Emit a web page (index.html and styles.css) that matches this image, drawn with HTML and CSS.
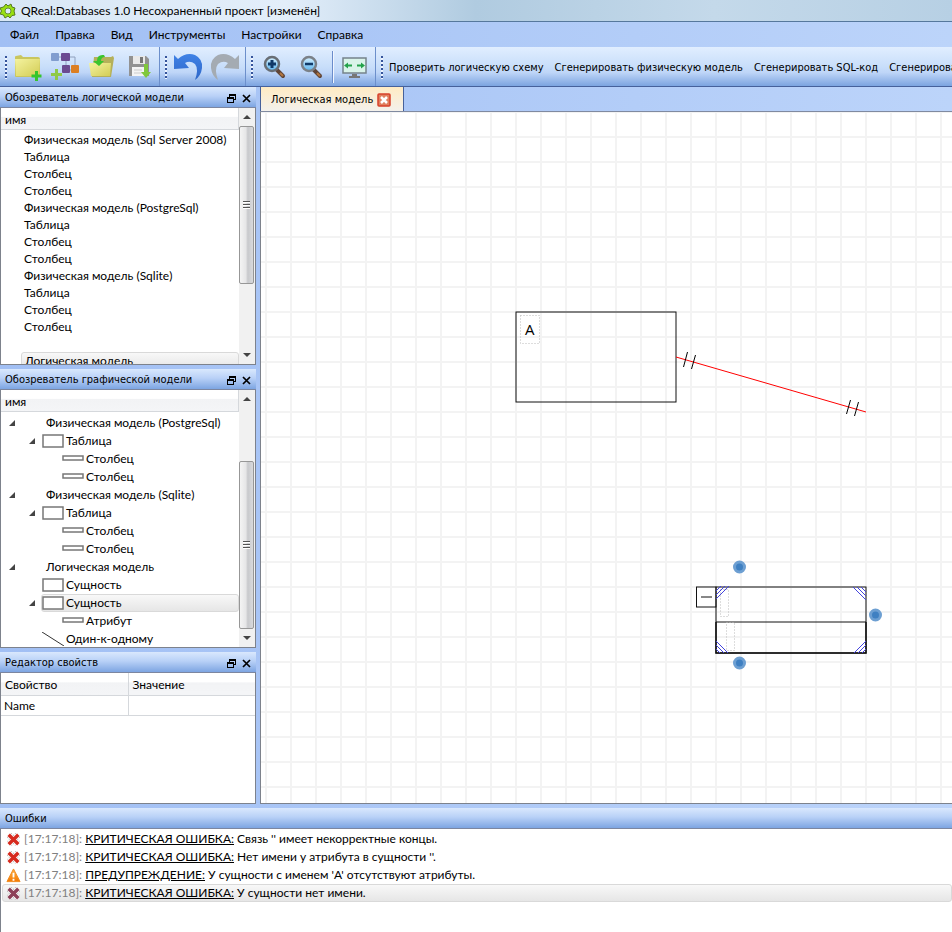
FILE: index.html
```html
<!DOCTYPE html>
<html lang="ru">
<head>
<meta charset="utf-8">
<title>QReal:Databases 1.0</title>
<link rel="stylesheet" href="styles.css">
</head>
<body>
<svg class="defs" aria-hidden="true">
  <defs>
    <linearGradient id="folder" x1="0" y1="0" x2="1" y2="1"><stop offset="0" stop-color="#f4f3a0"/><stop offset="1" stop-color="#d3cd55"/></linearGradient>
    <linearGradient id="undo" x1="0" y1="0" x2="0" y2="1"><stop offset="0" stop-color="#3f82e6"/><stop offset="1" stop-color="#2f67c8"/></linearGradient>
    <linearGradient id="lens" x1="0" y1="0" x2="0" y2="1"><stop offset="0" stop-color="#d5f0ff"/><stop offset="1" stop-color="#5db5ee"/></linearGradient>
    <linearGradient id="warn" x1="0" y1="0" x2="0" y2="1"><stop offset="0" stop-color="#ffb347"/><stop offset="1" stop-color="#f57900"/></linearGradient>
    <symbol id="float" viewBox="0 0 9 9"><path d="M2 0h7v6H7V5h1V2H3v1H2zM0 3h7v6H0zM1 5v3h5V5z" fill="#000" fill-rule="evenodd"/></symbol>
    <symbol id="close" viewBox="0 0 9 9"><path d="M1 1l7 7M8 1l-7 7" stroke="#000" stroke-width="1.7"/></symbol>
    <symbol id="entity" viewBox="0 0 22 14"><rect x="1" y="1" width="20" height="12" fill="#fff" stroke="#777" stroke-width="1.5"/></symbol>
    <symbol id="column" viewBox="0 0 22 14"><rect x="1" y="4" width="20" height="4" fill="#fff" stroke="#777" stroke-width="1.5"/></symbol>
    <symbol id="link" viewBox="0 0 22 14"><path d="M0 0l22 14" stroke="#333" fill="none"/></symbol>
    <symbol id="cross" viewBox="0 0 14 14"><path d="M3 3l8 8M11 3l-8 8" stroke="#aaa" stroke-width="6" stroke-dasharray="1 1"/><path d="M3 3l8 8M11 3l-8 8" stroke="#fff" stroke-width="4.600"/><path d="M2.500 2.500l9 9M11.500 2.500l-9 9" stroke="currentColor" stroke-width="3.200"/></symbol>
    <symbol id="warning" viewBox="0 0 16 16"><path d="M8 1L15 14.500H1z" fill="url(#warn)" stroke="#ef8a1d" stroke-linejoin="round"/><path d="M8 5v5M8 11.500v2" stroke="#fff" stroke-width="2"/></symbol>
  </defs>
</svg>

<div class="window">
  <header class="titlebar">
    <svg class="app-icon" viewBox="0 0 16 16"><path d="M6 1l2 2 3-2 1 3 3 1-1 3 1 4-3 .5L10 15l-2-2-3 2-1.500-3L0 11l1.500-3L0 5l3.500-1z" fill="#98e010" stroke="#567a20"/><circle cx="8" cy="8" r="3" fill="#dcebf5" stroke="#678f35"/></svg>
    <span>QReal:Databases 1.0 Несохраненный проект [изменён]</span>
  </header>

  <nav class="menubar">
    <button>Файл</button><button>Правка</button><button>Вид</button><button>Инструменты</button><button>Настройки</button><button>Справка</button>
  </nav>

  <div class="toolbar">
    <div class="group">
      <i class="grip"></i>
      <button class="tool" aria-label="Новый проект"><svg viewBox="0 0 32 32"><path d="M3 6q0-1 1-1l5-1 2 2h15q2 0 2 2v15l-2 3H4q-1 0-1-1z" fill="#c9c65f"/><path d="M3 8h25l-1 17H4z" fill="url(#folder)"/><path d="M24.500 20v10M19.500 25h10" stroke="#36c52c" stroke-width="3"/></svg></button>
      <button class="tool" aria-label="Новая диаграмма"><svg viewBox="0 0 32 32"><path d="M10 6h16v8M17 9v10h6" stroke="#8fa0bc" fill="none"/><rect x="2" y="2" width="8" height="8" rx="1" fill="#819dcf"/><rect x="12" y="2" width="9" height="8" rx="1" fill="#6b4a91"/><rect x="13" y="14" width="8" height="8" rx="1" fill="#6b4a91"/><rect x="22" y="14" width="8" height="8" rx="1" fill="#dc7f23"/><path d="M7.500 18v11M2 23.500h11" stroke="#8fc947" stroke-width="3"/></svg></button>
      <button class="tool" aria-label="Открыть"><svg viewBox="0 0 32 32"><path d="M8 6h17l2-1 1 2-3 19H6z" fill="#b5b05a"/><path d="M3 12h22l-1 13H5z" fill="url(#folder)"/><path d="M18 4Q11 3 11 10H7l6 5 5-5h-3q0-4 4-4z" fill="#3bc52e"/></svg></button>
      <button class="tool" aria-label="Сохранить"><svg viewBox="0 0 32 32"><path d="M6 5h17l3 3v17H6z" fill="#929292"/><path d="M10 5h12v8H10z" fill="#e9e9e9"/><path d="M17 6h3v6h-3z" fill="#777"/><path d="M9 16h14v9H9z" fill="#f4f4f4"/><path d="M11 19h8M11 22h8" stroke="#ccc"/><path d="M21 13h4v8h3l-5 6-5-6h3z" fill="#80c83c"/></svg></button>
    </div>
    <div class="group">
      <i class="grip"></i>
      <button class="tool" aria-label="Отменить"><svg viewBox="0 0 32 32"><path d="M2 4l4 4Q14 1 23 4q8 4 7 13-1 8-7 12 4-11 0-16-5-4-10-1l4 5-15 1z" fill="url(#undo)"/></svg></button>
      <button class="tool" aria-label="Повторить"><svg viewBox="0 0 32 32"><path d="M30 4l-4 4Q18 1 9 4q-8 4-7 13 1 8 7 12-4-11 0-16 5-4 10-1l-4 5 15 1z" fill="#a4abb2"/></svg></button>
    </div>
    <div class="group">
      <i class="grip"></i>
      <button class="tool" aria-label="Увеличить"><svg viewBox="0 0 32 32"><path d="M19 19l6 6" stroke="#604537" stroke-width="4" stroke-linecap="round"/><path d="M22 22l3 3" stroke="#b37740" stroke-width="2"/><circle cx="14" cy="13" r="7" fill="url(#lens)" stroke="#686e75" stroke-width="2.500"/><path d="M14 9v8M10 13h8" stroke="#103a68" stroke-width="3"/></svg></button>
      <button class="tool" aria-label="Уменьшить"><svg viewBox="0 0 32 32"><path d="M19 19l6 6" stroke="#604537" stroke-width="4" stroke-linecap="round"/><path d="M22 22l3 3" stroke="#b37740" stroke-width="2"/><circle cx="14" cy="13" r="7" fill="url(#lens)" stroke="#7b8188" stroke-width="2.500"/><path d="M10 13h8" stroke="#103a68" stroke-width="2.500"/></svg></button>
      <i class="separator"></i>
      <button class="tool" aria-label="По размеру окна"><svg viewBox="0 0 32 32"><rect x="4" y="7" width="23" height="15" fill="#d9f3e9" stroke="#75838a" stroke-width="1.500"/><path d="M13 23h5v2h3v2H10v-2h3z" fill="#777"/><path d="M5 14.500l4-3v2h4v2h-4v2zM26 14.500l-4-3v2h-4v2h4v2z" fill="#23a24a"/></svg></button>
    </div>
    <div class="group actions">
      <i class="grip"></i>
      <button>Проверить логическую схему</button><button>Сгенерировать физическую модель</button><button>Сгенерировать SQL-код</button><button>Сгенерировать логическую модель</button>
    </div>
  </div>

  <main class="workspace">
    <aside class="docks">
      <section class="dock">
        <h2>Обозреватель логической модели <button aria-label="Открепить"><svg><use href="#float"/></svg></button><button aria-label="Закрыть"><svg><use href="#close"/></svg></button></h2>
        <div class="dock-body">
          <div class="tree-pane">
            <div class="column-head">имя</div>
            <ul class="tree flat">
              <li>Физическая модель (Sql Server 2008)</li><li>Таблица</li><li>Столбец</li><li>Столбец</li>
              <li>Физическая модель (PostgreSql)</li><li>Таблица</li><li>Столбец</li><li>Столбец</li>
              <li>Физическая модель (Sqlite)</li><li>Таблица</li><li>Столбец</li><li>Столбец</li>
              <li></li><li class="current">Логическая модель</li>
            </ul>
          </div>
          <div class="scrollbar"><i class="arrow up"></i><div class="track upper"><i class="thumb"></i></div><i class="arrow down"></i></div>
        </div>
      </section>

      <section class="dock">
        <h2>Обозреватель графической модели <button aria-label="Открепить"><svg><use href="#float"/></svg></button><button aria-label="Закрыть"><svg><use href="#close"/></svg></button></h2>
        <div class="dock-body">
          <div class="tree-pane">
            <div class="column-head">имя</div>
            <ul class="tree">
              <li class="level1"><i class="open"></i><span class="item root">Физическая модель (PostgreSql)</span></li>
              <li class="level2"><i class="open"></i><span class="item"><svg><use href="#entity"/></svg>Таблица</span></li>
              <li class="level3"><i></i><span class="item"><svg><use href="#column"/></svg>Столбец</span></li>
              <li class="level3"><i></i><span class="item"><svg><use href="#column"/></svg>Столбец</span></li>
              <li class="level1"><i class="open"></i><span class="item root">Физическая модель (Sqlite)</span></li>
              <li class="level2"><i class="open"></i><span class="item"><svg><use href="#entity"/></svg>Таблица</span></li>
              <li class="level3"><i></i><span class="item"><svg><use href="#column"/></svg>Столбец</span></li>
              <li class="level3"><i></i><span class="item"><svg><use href="#column"/></svg>Столбец</span></li>
              <li class="level1"><i class="open"></i><span class="item root">Логическая модель</span></li>
              <li class="level2"><i></i><span class="item"><svg><use href="#entity"/></svg>Сущность</span></li>
              <li class="level2"><i class="open"></i><span class="item current"><svg><use href="#entity"/></svg>Сущность</span></li>
              <li class="level3"><i></i><span class="item"><svg><use href="#column"/></svg>Атрибут</span></li>
              <li class="level2"><i></i><span class="item"><svg><use href="#link"/></svg>Один-к-одному</span></li>
            </ul>
          </div>
          <div class="scrollbar"><i class="arrow up"></i><div class="track lower"><i class="thumb"></i></div><i class="arrow down"></i></div>
        </div>
      </section>

      <section class="dock">
        <h2>Редактор свойств <button aria-label="Открепить"><svg><use href="#float"/></svg></button><button aria-label="Закрыть"><svg><use href="#close"/></svg></button></h2>
        <div class="dock-body">
          <table class="properties">
            <thead><tr><th>Свойство</th><th>Значение</th></tr></thead>
            <tbody><tr><td>Name</td><td></td></tr></tbody>
          </table>
        </div>
      </section>
    </aside>

    <section class="editor">
      <div class="tabs">
        <div class="tab">Логическая модель <button aria-label="Закрыть вкладку"><svg viewBox="0 0 14 14"><rect x="1" y="1" width="12" height="12" rx="1" fill="#e0805f" stroke="#d8402a" stroke-width="1.500"/><path d="M4 4l6 6M10 4l-6 6" stroke="#fff" stroke-width="2.500"/></svg></button></div>
      </div>
      <div class="canvas">
        <svg class="diagram" width="691" height="691" viewBox="261 112 691 691">
          <g fill="#fff" stroke="#111">
            <rect x="516" y="312" width="160" height="90" fill="none"/>
            <rect x="696.500" y="587" width="19.500" height="20"/>
            <path d="M701 597h11"/>
            <rect x="716" y="587" width="150" height="66" fill="none"/>
            <path d="M716 622h150" />
            <path d="M716 622v31h150v-31" fill="none" stroke-width="1.500"/>
          </g>
          <g fill="none" stroke="#bbb" stroke-dasharray="1 2">
            <path d="M520.500 315.500h19v28h-19z"/>
            <path d="M720.500 589.500h8v27h-8zM726.500 622.500h8v28h-8z"/>
          </g>
          <text x="525" y="335">A</text>
          <path d="M676 357L866 412" stroke="#f00" fill="none"/>
          <path d="M687.500 352l-4 15M695.500 355l-4 14M850.500 400l-4 14M858.500 402l-4 14" stroke="#000"/>
          <path d="M716 591l5-5M716 595l9-9M716 599l13-13M853 587l13 13M857 587l9 9M861 587l5 5M716 641l12 12M716 645l8 8M716 649l4 4M866 641l-12 12M866 645l-8 8M866 649l-4 4" stroke="#44d" fill="none"/>
          <g fill="#3f80c2" stroke="#6d9fd2" stroke-width="3"><circle cx="739.500" cy="567" r="5"/><circle cx="875.500" cy="615" r="5"/><circle cx="739.500" cy="663" r="5"/></g>
        </svg>
      </div>
    </section>
  </main>

  <section class="dock errors">
    <h2>Ошибки</h2>
    <ul class="log">
      <li><svg class="bad"><use href="#cross"/></svg><p><time>[17:17:18]:</time> <u>КРИТИЧЕСКАЯ ОШИБКА:</u> Связь '' имеет некорректные концы.</p></li>
      <li><svg class="bad"><use href="#cross"/></svg><p><time>[17:17:18]:</time> <u>КРИТИЧЕСКАЯ ОШИБКА:</u> Нет имени у атрибута в сущности ''.</p></li>
      <li><svg><use href="#warning"/></svg><p><time>[17:17:18]:</time> <u>ПРЕДУПРЕЖДЕНИЕ:</u> У сущности с именем 'A' отсутствуют атрибуты.</p></li>
      <li class="current"><svg class="muted"><use href="#cross"/></svg><p><time>[17:17:18]:</time> <u>КРИТИЧЕСКАЯ ОШИБКА:</u> У сущности нет имени.</p></li>
    </ul>
  </section>
</div>
</body>
</html>
```
FILE: styles.css
```css
* { box-sizing: border-box; }

body {
  margin: 0;
  font: 12px/16px Lato, "Open Sans", sans-serif;
  color: #000;
}

button {
  border: 0;
  padding: 0;
  background: none;
  font: inherit;
  color: inherit;
}

ul { list-style: none; margin: 0; padding: 0; }
svg { display: block; flex: none; }
.defs { position: absolute; width: 0; height: 0; }

.window {
  display: flex;
  flex-direction: column;
  height: 100vh;
  overflow: hidden;
  background: linear-gradient(90deg, #a1bff4, #bcd4fa);
}

.titlebar {
  display: flex;
  align-items: center;
  gap: 5px;
  flex: none;
  height: 22px;
  border-bottom: 1px solid #56789c;
  background: linear-gradient(90deg, #d8e7f5 0, #e3eefa 30%, #b0cbe0 50%, #c4d9ea 75%, #b7d0e4);
}
.app-icon { width: 16px; height: 16px; }

.menubar { display: flex; flex: none; height: 25px; padding: 0 4px; }
.menubar button { padding: 0 6px 0 6px; margin-right: 4px; }

.toolbar {
  display: flex;
  flex: none;
  height: 40px;
  border-bottom: 1px solid #46619b;
  overflow: hidden;
}
.group {
  display: flex;
  align-items: center;
  flex: none;
  padding: 1px 2px 0 0;
  border-right: 1px solid #6c8fcb;
  background: linear-gradient(#e1eeff, #c8defa 50%, #bfd6f8 65%, #7ca4e0);
}
.actions { flex: 1 0 auto; border-right: 0; }
.grip {
  width: 2px;
  height: 23px;
  margin: 0 2px 0 5px;
  background: repeating-linear-gradient(#35549b 0 2px, #eef5ff 2px 4px);
}
.tool { display: flex; align-items: center; justify-content: center; width: 37px; height: 38px; }
.tool svg { width: 32px; height: 32px; }
.separator { width: 2px; height: 32px; margin: 0 2px 0 3px; background: linear-gradient(90deg, #6a8ccb 50%, #f1f6ff 50%); }
.actions button {
  padding: 2px 7px 0 4px;
  font: 11px/16px "DejaVu Sans Condensed", "DejaVu Sans", sans-serif;
  white-space: nowrap;
}

.workspace { display: flex; flex: 1; min-height: 0; gap: 4px; }
.docks {
  display: grid;
  flex: none;
  width: 256px;
  grid-template-rows: 278fr 279fr 152fr;
  gap: 4px;
}
.dock { display: flex; flex-direction: column; min-height: 0; }
.dock h2 {
  display: flex;
  align-items: center;
  flex: none;
  gap: 6px;
  height: 21px;
  margin: 0;
  padding: 2px 5px 0;
  border-bottom: 1px solid #7c86a0;
  background: linear-gradient(#d9e8fd, #b9d1f7 45%, #7da5e2);
  font: 11px/16px "DejaVu Sans Condensed", "DejaVu Sans", sans-serif;
}
.dock h2 button:first-of-type { margin-left: auto; }
.dock h2 svg { width: 9px; height: 9px; }
.dock-body {
  display: flex;
  flex: 1;
  min-height: 0;
  border: solid #7d828c;
  border-width: 0 1px 1px;
  background: #fff;
}
.tree-pane { flex: 1; min-width: 0; overflow: hidden; }
.column-head {
  height: 22px;
  padding: 4px 4px 0;
  border: solid #d5d8dc;
  border-width: 0 1px 1px 0;
  background: linear-gradient(#fff 40%, #f2f3f5 45%, #f4f5f7);
}
.tree { padding-top: 2px; }
.tree li { display: flex; align-items: center; height: 18px; white-space: nowrap; }
.tree.flat { padding-top: 1px; }
.tree.flat li { height: 17px; margin-left: 20px; padding-left: 3px; }
.current { border: 1px solid #d9d9d9; border-radius: 3px; background: linear-gradient(#f8f8f8, #e6e6e6); }
.tree i { width: 20px; flex: none; }
.tree .open::before {
  content: "";
  display: block;
  width: 6px;
  height: 6px;
  margin-left: 8px;
  background: #444;
  clip-path: polygon(100% 0, 100% 100%, 0 100%);
}
.level2 { padding-left: 20px; }
.level3 { padding-left: 40px; }
.item { display: flex; align-items: center; flex: 1; height: 18px; gap: 2px; }
.item svg { width: 22px; height: 14px; }
.item:not(.current) { border: 1px solid transparent; }
.root { padding-left: 24px; }

.scrollbar { display: flex; flex-direction: column; flex: none; width: 16px; background: #f1f1f1; }
.arrow { height: 18px; flex: none; }
.arrow::before {
  content: "";
  display: block;
  width: 0;
  margin: 7px 0 0 4px;
  border: 4px solid transparent;
  border-top-width: 0;
  border-bottom-color: #444;
}
.arrow.down::before { border-width: 4px 4px 0; border-top-color: #444; }
.track { display: flex; flex: 1; flex-direction: column; }
.thumb {
  display: flex;
  flex: none;
  align-items: center;
  justify-content: center;
  height: 72%;
  margin-right: 1px;
  border: 1px solid #979797;
  border-radius: 2px;
  background: linear-gradient(90deg, #f4f4f4, #e6e6e7 45%, #c8c9cc 60%, #d9dadc);
}
.lower { justify-content: flex-end; }
.lower .thumb { height: 76%; }
.thumb::before { content: ""; width: 7px; height: 8px; background: repeating-linear-gradient(#555 0 1px, #fff 1px 2px, transparent 2px 3px); }

.properties { width: 100%; height: 43px; table-layout: fixed; border-collapse: collapse; }
.properties th, .properties td { padding: 2px 3px 0; border: solid #d5d8dc; border-width: 0 0 1px; text-align: left; font-weight: 400; }
.properties th { height: 22px; padding-left: 4px; background: linear-gradient(#fff 40%, #f2f3f5 45%, #f4f5f7); }
.properties td { height: 20px; }
.properties th:first-child, .properties td:first-child { border-right-width: 1px; }

.editor { display: flex; flex: 1; flex-direction: column; min-width: 0; }
.tabs { display: flex; flex: none; height: 25px; border-bottom: 1px solid #808aa0; }
.tab {
  display: flex;
  align-items: center;
  gap: 4px;
  padding: 1px 12px 0 10px;
  border: solid #46619b;
  border-width: 0 1px;
  background: linear-gradient(#ffebc3, #f3f1ec);
  font: 11px/16px "DejaVu Sans Condensed", "DejaVu Sans", sans-serif;
}
.tab svg { width: 14px; height: 14px; }
.canvas {
  flex: 1;
  min-height: 0;
  overflow: hidden;
  border: solid #7d828c;
  border-width: 0 0 1px 1px;
  background-color: #fff;
  background-image: linear-gradient(90deg, #f3f3f3 2px, transparent 2px), linear-gradient(#f3f3f3 2px, transparent 2px);
  background-size: 25px 25px;
  background-position: 4px 24px;
}
.diagram text { font: 15px "Open Sans", sans-serif; }

.errors { flex: none; height: 124px; margin-top: 4px; }
.log { flex: 1; padding-top: 1px; border-left: 1px solid #7d828c; background: #fff; }
.log li { display: flex; align-items: center; gap: 3px; height: 18px; margin-left: 1px; padding-left: 3px; border: 1px solid transparent; }
.log .current { border-color: #d9d9d9; }
.log svg { width: 15px; height: 15px; }
.log p { margin: 0; }
.log time { color: #808080; }
.bad { color: #d62a1e; }
.muted { color: #8d4058; }
```
